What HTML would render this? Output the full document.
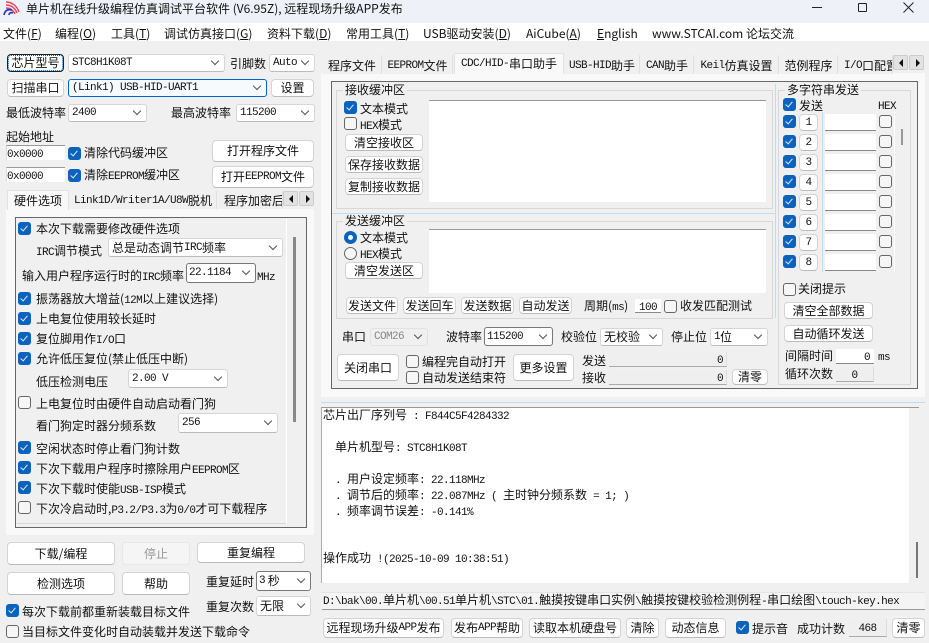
<!DOCTYPE html>
<html><head><meta charset="utf-8"><style>
html,body{margin:0;padding:0}
body{width:929px;height:643px;overflow:hidden;position:relative;background:#f0f0f0;color:#111;font:12px/14px "Noto Sans CJK SC","Liberation Sans",sans-serif}
div{position:absolute;box-sizing:border-box}
i{font:normal 11px/14px "Liberation Mono",monospace;letter-spacing:-.6px}
.t{white-space:nowrap;height:14px;margin-top:1px}
.b,.c,.tab{white-space:nowrap;display:flex;align-items:center}
.b{background:#fff;border:1px solid #d4d4d4;border-bottom-color:#bbb;border-radius:4px;justify-content:center}
.c{background:#fff;border:1px solid #d6d6d6;border-bottom-color:#bbb;border-radius:3px;padding-left:3px}
.c:after{content:"";position:absolute;right:6px;top:50%;margin-top:-5px;width:5px;height:5px;border-right:1px solid #555;border-bottom:1px solid #555;transform:rotate(45deg)}
.d{border-color:#777}
.k,.u{width:13px;height:13px;border-radius:3px}
.k{background:#0b63bd}
.k:after{content:"";position:absolute;left:4px;top:2px;width:3px;height:6px;border-right:1px solid #dfeaf6;border-bottom:1px solid #dfeaf6;transform:rotate(40deg)}
.u{background:#f6f6f6;border:1px solid #666}
.tab{background:#f0f0f0;border-right:1px solid #e0e0e0;justify-content:center;height:19px;padding-top:2px}
.on{background:#f9f9f9;border:1px solid #e2e2e2;border-bottom:0;padding-top:0}
.s{width:15px;height:15px;background:#e2e2e2;border:1px solid #ccc;border-radius:2px}
.s:after{content:"";position:absolute;left:5px;top:3px;border:4px solid transparent}
.sl:after{border-right:4px solid #111;border-left:0}
.sr:after{border-left:4px solid #111;border-right:0;left:6px}
.g{border:1px solid #d8d8d8}
.w{background:#fff;border-top:1px solid #999}
.f{background:#efefef;border-bottom:1px solid #aaa;border-right:1px solid #ddd;text-align:right;padding-right:3px;margin-top:0}
.in{background:#fff;border-bottom:1px solid #888;margin-top:0}
.lb{height:1px;background:#bfdcf3}
.lv{width:1px;background:#bfdcf3}
.lbl{background:#f0f0f0;padding:0 2px}
.z{margin-top:0}
</style></head><body>
<!-- title -->
<div style="left:0;top:0;width:929px;height:23px;background:#eef2f8"></div>
<svg style="position:absolute;left:3px;top:1px" width="18" height="15" viewBox="0 0 18 15"><g fill="none" stroke="#e8404f" stroke-width="1.4"><path d="M3 1C9 1 14 5 16 11"/><path d="M3 4C8 4 12 7 14 12"/><path d="M3 7C7 7 10 9 12 13"/></g><path d="M1 14C2 9 5 8 9 9 M6 14C6 12 8 11 10 12" fill="none" stroke="#2234c8" stroke-width="1.6"/></svg>
<div class="t" style="left:26px;top:1px">单片机在线升级编程仿真调试平台软件 (V6.95Z), 远程现场升级APP发布</div>
<div style="left:812px;top:7px;width:10px;height:1px;background:#222"></div>
<div style="left:858px;top:3px;width:9px;height:9px;border:1px solid #222;border-radius:1px"></div>
<svg style="position:absolute;left:903px;top:2px" width="11" height="11"><path d="M.5.5L10.5 10.5M10.5.5L.5 10.5" stroke="#222" fill="none"/></svg>
<!-- menu -->
<div style="left:0;top:23px;width:929px;height:18px;background:#fff"></div>
<div class="t" style="left:3px;top:26px">文件(<u>F</u>)</div>
<div class="t" style="left:55px;top:26px">编程(<u>O</u>)</div>
<div class="t" style="left:111px;top:26px">工具(<u>T</u>)</div>
<div class="t" style="left:164px;top:26px">调试仿真接口(<u>G</u>)</div>
<div class="t" style="left:267px;top:26px">资料下载(<u>D</u>)</div>
<div class="t" style="left:346px;top:26px">常用工具(<u>T</u>)</div>
<div class="t" style="left:423px;top:26px">USB驱动安装(<u>D</u>)</div>
<div class="t" style="left:526px;top:26px">AiCube(<u>A</u>)</div>
<div class="t" style="left:597px;top:26px"><u>E</u>nglish</div>
<div class="t" style="left:652px;top:26px">www.STCAI.com 论坛交流</div>
<!-- left top -->
<div class="b" style="left:7px;top:54px;width:57px;height:18px;border:1px solid #123;outline:1px dotted #0067c0;outline-offset:-2px">芯片型号</div>
<div class="c" style="left:68px;top:54px;width:157px;height:18px"><i>STC8H1K08T</i></div>
<div class="t" style="left:230px;top:56px">引脚数</div>
<div class="c" style="left:269px;top:54px;width:46px;height:18px"><i>Auto</i></div>
<div class="b" style="left:7px;top:79px;width:57px;height:18px">扫描串口</div>
<div class="c" style="left:68px;top:79px;width:199px;height:18px;border-color:#0067c0;background:#f7fafd"><i>(Link1) USB-HID-UART1</i></div>
<div class="b" style="left:271px;top:79px;width:43px;height:18px">设置</div>
<div class="t" style="left:6px;top:105px">最低波特率</div>
<div class="c" style="left:68px;top:104px;width:79px;height:18px"><i>2400</i></div>
<div class="t" style="left:171px;top:105px">最高波特率</div>
<div class="c" style="left:236px;top:104px;width:79px;height:18px"><i>115200</i></div>
<div class="t" style="left:6px;top:129px">起始地址</div>
<div style="left:6px;top:145px;width:59px;height:15px;background:#fff;border-top:1px solid #999;border-left:1px solid #ddd"></div>
<div class="t" style="left:7px;top:145px"><i>0x0000</i></div>
<div class="k" style="left:68px;top:147px"></div>
<div class="t" style="left:84px;top:145px">清除代码缓冲区</div>
<div style="left:6px;top:167px;width:59px;height:15px;background:#fff;border-top:1px solid #999;border-left:1px solid #ddd"></div>
<div class="t" style="left:7px;top:167px"><i>0x0000</i></div>
<div class="k" style="left:68px;top:169px"></div>
<div class="t" style="left:84px;top:167px">清除<i>EEPROM</i>缓冲区</div>
<div class="b" style="left:212px;top:140px;width:102px;height:22px">打开程序文件</div>
<div class="b" style="left:212px;top:166px;width:102px;height:22px">打开<i>EEPROM</i>文件</div>
<!-- left tabs -->
<div style="left:6px;top:209px;width:308px;height:326px;background:#f9f9f9"></div>
<div class="tab on" style="left:7px;top:190px;width:62px;height:20px">硬件选项</div>
<div class="tab" style="left:70px;top:191px;width:147px;height:18px"><i>Link1D/Writer1A/U8W</i>脱机</div>
<div class="tab" style="left:218px;top:191px;width:65px;height:18px;overflow:hidden;justify-content:flex-start;padding-left:6px">程序加密后</div>
<div class="s sl" style="left:283px;top:191px"></div>
<div class="s sr" style="left:299px;top:191px"></div>
<div style="left:15px;top:217px;width:292px;height:311px;border:1px solid #666;background:#f0f0f0"></div>
<div class="lv" style="left:286px;top:219px;height:305px;background:#fff"></div>
<div style="left:17px;top:523px;width:269px;height:1px;background:#d8d8d8"></div>
<div style="left:293px;top:237px;width:3px;height:185px;background:#888"></div>
<div class="k" style="left:18px;top:222px"></div>
<div class="t" style="left:36px;top:221px">本次下载需要修改硬件选项</div>
<div class="t" style="left:36px;top:243px"><i>IRC</i>调节模式</div>
<div class="c" style="left:108px;top:238px;width:175px;height:19px">总是动态调节<i>IRC</i>频率</div>
<div class="t" style="left:22px;top:268px">输入用户程序运行时的<i>IRC</i>频率</div>
<div class="c d" style="left:186px;top:263px;width:70px;height:20px;padding-left:2px"><i>22.1184</i></div>
<div class="t" style="left:257px;top:268px"><i>MHz</i></div>
<div class="k" style="left:18px;top:292px"></div>
<div class="t" style="left:36px;top:291px">振荡器放大增益(<i>12M</i>以上建议选择)</div>
<div class="k" style="left:18px;top:312px"></div>
<div class="t" style="left:36px;top:311px">上电复位使用较长延时</div>
<div class="k" style="left:18px;top:332px"></div>
<div class="t" style="left:36px;top:331px">复位脚用作<i>I/O</i>口</div>
<div class="k" style="left:18px;top:352px"></div>
<div class="t" style="left:36px;top:351px">允许低压复位(禁止低压中断)</div>
<div class="t" style="left:36px;top:374px">低压检测电压</div>
<div class="c" style="left:128px;top:369px;width:100px;height:19px"><i>2.00 V</i></div>
<div class="u" style="left:18px;top:396px"></div>
<div class="t" style="left:36px;top:396px">上电复位时由硬件自动启动看门狗</div>
<div class="t" style="left:36px;top:418px">看门狗定时器分频系数</div>
<div class="c" style="left:178px;top:413px;width:100px;height:20px"><i>256</i></div>
<div class="k" style="left:18px;top:441px"></div>
<div class="t" style="left:36px;top:441px">空闲状态时停止看门狗计数</div>
<div class="k" style="left:18px;top:461px"></div>
<div class="t" style="left:36px;top:461px">下次下载用户程序时擦除用户<i>EEPROM</i>区</div>
<div class="k" style="left:18px;top:481px"></div>
<div class="t" style="left:36px;top:481px">下次下载时使能<i>USB-ISP</i>模式</div>
<div class="u" style="left:18px;top:501px"></div>
<div class="t" style="left:36px;top:501px">下次冷启动时,<i>P3.2/P3.3</i>为<i>0/0</i>才可下载程序</div>
<!-- left bottom -->
<div class="b" style="left:7px;top:542px;width:108px;height:23px">下载/编程</div>
<div class="b" style="left:122px;top:542px;width:68px;height:23px;background:#f5f5f5;border-color:#e8e8e8;color:#999">停止</div>
<div class="b" style="left:197px;top:542px;width:108px;height:21px">重复编程</div>
<div class="b" style="left:7px;top:572px;width:108px;height:23px">检测选项</div>
<div class="b" style="left:122px;top:572px;width:68px;height:23px">帮助</div>
<div class="t" style="left:206px;top:574px">重复延时</div>
<div class="c d" style="left:256px;top:571px;width:55px;height:20px;padding-left:2px"><i>3 </i>&nbsp;秒</div>
<div class="t" style="left:206px;top:599px">重复次数</div>
<div class="c" style="left:256px;top:596px;width:55px;height:20px">无限</div>
<div class="k" style="left:6px;top:604px"></div>
<div class="t" style="left:22px;top:604px">每次下载前都重新装载目标文件</div>
<div class="u" style="left:6px;top:625px"></div>
<div class="t" style="left:22px;top:624px">当目标文件变化时自动装载并发送下载命令</div>
<!-- right tabs -->
<div style="left:321px;top:73px;width:604px;height:324px;background:#f9f9f9"></div>
<div class="tab" style="left:323px;top:55px;width:59px">程序文件</div>
<div class="tab" style="left:383px;top:55px;width:70px"><i>EEPROM</i>文件</div>
<div class="tab on" style="left:454px;top:53px;width:110px;height:21px"><i>CDC/HID-</i>串口助手</div>
<div class="tab" style="left:565px;top:55px;width:75px"><i>USB-HID</i>助手</div>
<div class="tab" style="left:641px;top:55px;width:53px"><i>CAN</i>助手</div>
<div class="tab" style="left:695px;top:55px;width:84px"><i>Keil</i>仿真设置</div>
<div class="tab" style="left:780px;top:55px;width:58px">范例程序</div>
<div class="tab" style="left:839px;top:55px;width:54px;overflow:hidden;justify-content:flex-start;padding-left:5px"><i>I/O</i>口配置</div>
<div class="s sl" style="left:893px;top:55px"></div>
<div class="s sr" style="left:909px;top:55px"></div>
<div style="left:331px;top:81px;width:587px;height:308px;border:1px solid #666;background:#f0f0f0"></div>
<!-- receive -->
<div class="g" style="left:336px;top:90px;width:437px;height:119px"></div>
<div class="t lbl z" style="left:343px;top:83px">接收缓冲区</div>
<div class="k" style="left:344px;top:101px"></div>
<div class="t" style="left:360px;top:101px">文本模式</div>
<div class="u" style="left:344px;top:117px"></div>
<div class="t" style="left:360px;top:117px"><i>HEX</i>模式</div>
<div class="b" style="left:345px;top:134px;width:78px;height:17px">清空接收区</div>
<div class="b" style="left:345px;top:156px;width:78px;height:17px">保存接收数据</div>
<div class="b" style="left:345px;top:178px;width:78px;height:17px">复制接收数据</div>
<div class="w" style="left:429px;top:100px;width:337px;height:102px"></div>
<div class="lb" style="left:332px;top:213px;width:443px"></div>
<div class="lv" style="left:775px;top:84px;height:234px"></div>
<!-- send -->
<div class="g" style="left:336px;top:221px;width:437px;height:98px"></div>
<div class="t lbl z" style="left:343px;top:214px">发送缓冲区</div>
<div style="left:344px;top:231px;width:13px;height:13px;border-radius:50%;background:#fff;border:4px solid #0b63bd"></div>
<div class="t" style="left:360px;top:230px">文本模式</div>
<div style="left:344px;top:247px;width:13px;height:13px;border-radius:50%;background:#f6f6f6;border:1px solid #666"></div>
<div class="t" style="left:360px;top:246px"><i>HEX</i>模式</div>
<div class="b" style="left:345px;top:262px;width:78px;height:17px">清空发送区</div>
<div class="w" style="left:429px;top:229px;width:337px;height:64px"></div>
<div class="b" style="left:346px;top:297px;width:52px;height:17px">发送文件</div>
<div class="b" style="left:403px;top:297px;width:53px;height:17px">发送回车</div>
<div class="b" style="left:461px;top:297px;width:53px;height:17px">发送数据</div>
<div class="b" style="left:519px;top:297px;width:53px;height:17px">自动发送</div>
<div class="t z" style="left:584px;top:299px">周期(<i>ms</i>)</div>
<div class="in t" style="left:635px;top:299px;width:26px;text-align:center"><i>100</i></div>
<div class="u" style="left:664px;top:300px"></div>
<div class="t z" style="left:680px;top:299px">收发匹配测试</div>
<!-- serial -->
<div class="t z" style="left:342px;top:330px">串口</div>
<div class="c" style="left:370px;top:328px;width:58px;height:18px;background:#f0f0f0;color:#888;border-color:#e2e2e2"><i>COM26</i></div>
<div class="t z" style="left:446px;top:330px">波特率</div>
<div class="c d" style="left:484px;top:327px;width:69px;height:19px;padding-left:2px"><i>115200</i></div>
<div class="t z" style="left:561px;top:330px">校验位</div>
<div class="c" style="left:600px;top:328px;width:63px;height:18px">无校验</div>
<div class="t z" style="left:671px;top:330px">停止位</div>
<div class="c" style="left:710px;top:328px;width:58px;height:18px"><i>1</i>位</div>
<div class="b" style="left:337px;top:354px;width:62px;height:27px">关闭串口</div>
<div class="u" style="left:406px;top:355px"></div>
<div class="t" style="left:422px;top:354px">编程完自动打开</div>
<div class="u" style="left:406px;top:371px"></div>
<div class="t" style="left:422px;top:370px">自动发送结束符</div>
<div class="b" style="left:513px;top:354px;width:61px;height:27px">更多设置</div>
<div class="t" style="left:582px;top:353px">发送</div>
<div class="f t" style="left:609px;top:352px;width:118px;height:15px"><i>0</i></div>
<div class="t" style="left:582px;top:370px">接收</div>
<div class="f t" style="left:609px;top:370px;width:118px;height:15px"><i>0</i></div>
<div class="b" style="left:732px;top:369px;width:36px;height:16px">清零</div>
<!-- multi -->
<div class="g" style="left:778px;top:90px;width:133px;height:295px"></div>
<div class="t lbl z" style="left:785px;top:83px">多字符串发送</div>
<div class="k" style="left:783px;top:98px"></div>
<div class="t" style="left:799px;top:98px">发送</div>
<div class="t z" style="left:878px;top:98px"><i>HEX</i></div>
<div class="lv" style="left:822px;top:112px;height:160px"></div>
<div class="lv" style="left:894px;top:112px;height:160px;background:#fff"></div>
<div style="left:901px;top:129px;width:2px;height:16px;background:#999"></div>
<div class="k" style="left:783px;top:115px"></div><div class="b" style="left:799px;top:114px;width:19px;height:17px"><i>1</i></div><div class="in" style="left:825px;top:114px;width:51px;height:17px"></div><div class="u" style="left:879px;top:115px"></div>
<div class="k" style="left:783px;top:135px"></div><div class="b" style="left:799px;top:134px;width:19px;height:17px"><i>2</i></div><div class="in" style="left:825px;top:134px;width:51px;height:17px"></div><div class="u" style="left:879px;top:135px"></div>
<div class="k" style="left:783px;top:155px"></div><div class="b" style="left:799px;top:154px;width:19px;height:17px"><i>3</i></div><div class="in" style="left:825px;top:154px;width:51px;height:17px"></div><div class="u" style="left:879px;top:155px"></div>
<div class="k" style="left:783px;top:175px"></div><div class="b" style="left:799px;top:174px;width:19px;height:17px"><i>4</i></div><div class="in" style="left:825px;top:174px;width:51px;height:17px"></div><div class="u" style="left:879px;top:175px"></div>
<div class="k" style="left:783px;top:195px"></div><div class="b" style="left:799px;top:194px;width:19px;height:17px"><i>5</i></div><div class="in" style="left:825px;top:194px;width:51px;height:17px"></div><div class="u" style="left:879px;top:195px"></div>
<div class="k" style="left:783px;top:215px"></div><div class="b" style="left:799px;top:214px;width:19px;height:17px"><i>6</i></div><div class="in" style="left:825px;top:214px;width:51px;height:17px"></div><div class="u" style="left:879px;top:215px"></div>
<div class="k" style="left:783px;top:235px"></div><div class="b" style="left:799px;top:234px;width:19px;height:17px"><i>7</i></div><div class="in" style="left:825px;top:234px;width:51px;height:17px"></div><div class="u" style="left:879px;top:235px"></div>
<div class="k" style="left:783px;top:255px"></div><div class="b" style="left:799px;top:254px;width:19px;height:17px"><i>8</i></div><div class="in" style="left:825px;top:254px;width:51px;height:17px"></div><div class="u" style="left:879px;top:255px"></div>
<div class="u" style="left:783px;top:283px"></div>
<div class="t z" style="left:798px;top:282px">关闭提示</div>
<div class="b" style="left:784px;top:302px;width:89px;height:17px">清空全部数据</div>
<div class="b" style="left:784px;top:325px;width:89px;height:17px">自动循环发送</div>
<div class="t z" style="left:785px;top:349px">间隔时间</div>
<div class="in t" style="left:836px;top:349px;width:38px;height:15px;text-align:right;padding-right:4px"><i>0</i></div>
<div class="t z" style="left:878px;top:349px"><i>ms</i></div>
<div class="t z" style="left:785px;top:367px">循环次数</div>
<div class="f t" style="left:836px;top:367px;width:38px;height:15px;text-align:center;padding:0"><i>0</i></div>
<!-- log -->
<div class="lb" style="left:321px;top:402px;width:604px"></div>
<div style="left:321px;top:407px;width:598px;height:176px;background:#fff;border-top:1px solid #999;border-left:1px solid #aaa"></div>
<div style="left:909px;top:408px;width:10px;height:175px;background:#f0f0f0"></div>
<div style="left:916px;top:542px;width:2px;height:36px;background:#777"></div>
<div class="t z" style="left:323px;top:408px">芯片出厂序列号<i> : F844C5F4284332</i></div>
<div class="t z" style="left:335px;top:440px">单片机型号<i>: STC8H1K08T</i></div>
<div class="t z" style="left:335px;top:472px"><i>. </i>用户设定频率<i>: 22.118MHz</i></div>
<div class="t z" style="left:335px;top:488px"><i>. </i>调节后的频率<i>: 22.087MHz ( </i>主时钟分频系数<i> = 1; )</i></div>
<div class="t z" style="left:335px;top:504px"><i>. </i>频率调节误差<i>: -0.141%</i></div>
<div class="t z" style="left:323px;top:551px">操作成功<i> !(2025-10-09 10:38:51)</i></div>
<div style="left:322px;top:592px;width:603px;height:18px;background:#f4f4f4;border-bottom:1px solid #999;border-top:1px solid #e4e4e4"></div>
<div class="t z" style="left:323px;top:593px"><i>D:\bak\00.</i>单片机<i>\00.51</i>单片机<i>\STC\01.</i>触摸按键串口实例<i>\</i>触摸按键校验检测例程<i>-</i>串口绘图<i>\touch-key.hex</i></div>
<!-- footer -->
<div class="b" style="left:323px;top:618px;width:121px;height:20px">远程现场升级<i>APP</i>发布</div>
<div class="b" style="left:451px;top:618px;width:72px;height:20px">发布<i>APP</i>帮助</div>
<div class="b" style="left:529px;top:618px;width:92px;height:20px">读取本机硬盘号</div>
<div class="b" style="left:626px;top:618px;width:33px;height:20px">清除</div>
<div class="b" style="left:665px;top:618px;width:61px;height:20px">动态信息</div>
<div class="k" style="left:736px;top:621px"></div>
<div class="t" style="left:752px;top:621px">提示音</div>
<div class="t" style="left:797px;top:621px">成功计数</div>
<div class="f t" style="left:849px;top:619px;width:38px;height:18px;text-align:center;padding:1px 0 0"><i>468</i></div>
<div class="b" style="left:892px;top:618px;width:33px;height:20px">清零</div>
</body></html>
